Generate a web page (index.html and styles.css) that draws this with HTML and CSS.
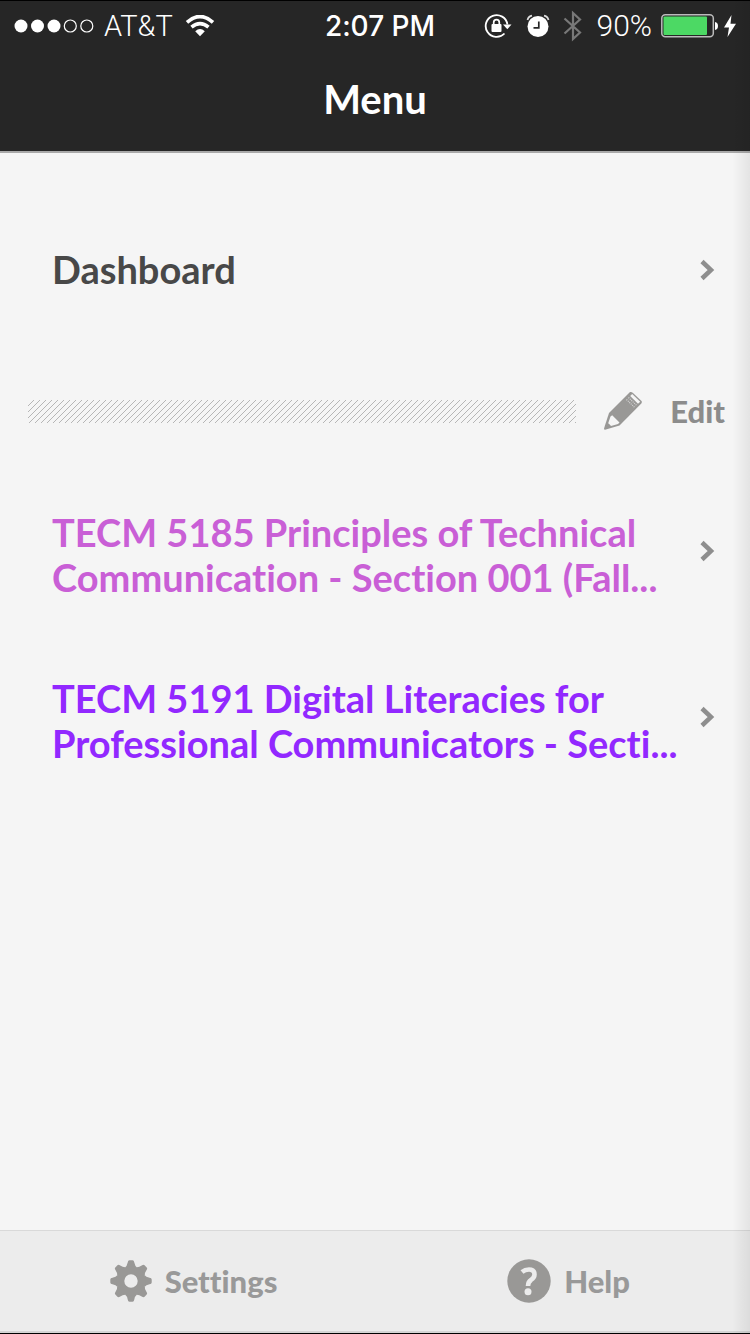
FILE: index.html
```html
<!DOCTYPE html>
<html lang="en">
<head>
<meta charset="utf-8">
<meta name="viewport" content="width=device-width, initial-scale=1">
<title>Menu</title>
<link rel="stylesheet" href="styles.css">
</head>
<body>
<div class="app">
  <header class="top">
    <div class="status">
      <div class="status-side">
        <svg class="signal" width="80" height="14" viewBox="0 0 80 14" aria-hidden="true">
          <g fill="#fff"><circle cx="7" cy="7" r="6.5"/><circle cx="23.5" cy="7" r="6.5"/><circle cx="40" cy="7" r="6.5"/></g>
          <g fill="none" stroke="#fff" stroke-width="1.2"><circle cx="56.300" cy="7" r="6"/><circle cx="72.800" cy="7" r="6"/></g>
        </svg>
        <span class="carrier">AT&amp;T</span>
        <svg class="wifi" width="30" height="22" viewBox="0 0 30 22" aria-hidden="true">
          <path d="M2 7.300Q15-4.300 28 7.300" fill="none" stroke="#fff" stroke-width="3.600"/>
          <path d="M6.500 12.200Q15 5 23.500 12.200" fill="none" stroke="#fff" stroke-width="3.600"/>
          <path d="M10.200 16.200Q15 12 19.800 16.200L15 21.200Z" fill="#fff"/>
        </svg>
      </div>
      <time class="clock">2:07 PM</time>
      <div class="status-side status-right">
        <svg width="28" height="26" viewBox="0 0 28 26" aria-hidden="true">
          <path d="M20.500 20.500A10.900 10.900 0 1 1 23.400 11.500" fill="none" stroke="#fff" stroke-width="1.800"/>
          <path d="M19 11.500H27.500L23.300 16.200Z" fill="#fff"/>
          <rect x="7.500" y="11" width="10" height="8" rx="1" fill="#fff"/>
          <path d="M9.700 11.500V9.500a2.800 2.800 0 0 1 5.600 0v2" fill="none" stroke="#fff" stroke-width="1.700"/>
        </svg>
        <svg class="alarm" width="24" height="24" viewBox="0 0 24 24" aria-hidden="true">
          <circle cx="12" cy="12.500" r="10.500" fill="#fff"/>
          <path d="M1.500 6Q2.500 2.200 6 1.600M22.500 6Q21.500 2.200 18 1.600" fill="none" stroke="#ddd" stroke-width="1.800"/>
          <path d="M12.800 7.500V13.800H7.500" fill="none" stroke="#262626" stroke-width="1.700"/>
        </svg>
        <svg class="bluetooth" width="20" height="32" viewBox="0 0 20 32" aria-hidden="true">
          <path d="M1.500 8.500L17 22.500L10 29V3L17 9.500L1.500 23.500" fill="none" stroke="#787878" stroke-width="2.200"/>
        </svg>
        <span class="percent">90%</span>
        <svg class="battery" width="58" height="24" viewBox="0 0 58 24" aria-hidden="true">
          <rect x=".8" y=".8" width="51.500" height="22" rx="3.500" fill="none" stroke="#bbb" stroke-width="1.500"/>
          <rect x="2.500" y="2.500" width="43.500" height="18.500" rx="1" fill="#4cd964"/>
          <path d="M54 8q3 .5 3 4t-3 4z" fill="#fff"/>
        </svg>
        <svg class="bolt" width="12" height="24" viewBox="0 0 12 24" aria-hidden="true"><path d="M7.500 1L0 13.500H5L3.500 23L12 9.800H6.500Z" fill="#fff"/></svg>
      </div>
    </div>
    <h1 class="title">Menu</h1>
  </header>

  <main class="content">
    <a class="row dashboard" href="#dashboard">
      <span class="row-text">Dashboard</span>
      <svg class="chevron" width="16" height="22" viewBox="0 0 16 22" aria-hidden="true"><path d="M2 2.500L11 11L2 19.500"/></svg>
    </a>

    <div class="divider">
      <svg class="hatch" height="23" aria-hidden="true">
        <defs><pattern id="stripes" width="6" height="6" patternUnits="userSpaceOnUse"><path d="M-1 7L7-1M-1 1L1-1M5 7L7 5" stroke="#b6b6b6" stroke-width="1"/></pattern></defs>
        <rect width="100%" height="23" fill="url(#stripes)"/>
      </svg>
      <button class="edit" type="button">
        <svg width="38" height="38" viewBox="0 0 38 38" aria-hidden="true">
          <path d="M26 0Q27.500-.2 29 1L37.500 9Q38.300 10 37.300 11.500L15.500 33.500L1 37.700Q0 37.700 0 36.500L5 21Z" fill="#999896"/>
          <path d="M6.500 24.500L8.200 23.300L15.500 30.500L14 32L7 34L5.700 32.500L4.200 31.200Z" fill="#f5f5f5"/>
          <path d="M26.200 4L34 11.800L36.200 9.800L28.200 2Z" fill="#f5f5f5"/>
          <path d="M24.500 5.500L32.700 13.500M22.500 7.500L30.700 15.500" fill="none" stroke="#d5d5d5" stroke-width="1.200" stroke-dasharray="1 1"/>
        </svg>
        <span>Edit</span>
      </button>
    </div>

    <nav class="courses" aria-label="Courses">
      <a class="row course orchid" href="#tecm-5185">
        <span class="row-text">TECM 5185 Principles of Technical<br>Communication - Section 001 (Fall...</span>
        <svg class="chevron" width="16" height="22" viewBox="0 0 16 22" aria-hidden="true"><path d="M2 2.500L11 11L2 19.500"/></svg>
      </a>
      <a class="row course violet" href="#tecm-5191">
        <span class="row-text">TECM 5191 Digital Literacies for<br>Professional Communicators - Secti...</span>
        <svg class="chevron" width="16" height="22" viewBox="0 0 16 22" aria-hidden="true"><path d="M2 2.500L11 11L2 19.500"/></svg>
      </a>
    </nav>
  </main>

  <footer class="toolbar">
    <button class="tool" type="button">
      <svg width="42" height="42" viewBox="-21 -21 42 42" aria-hidden="true">
        <defs><path id="tooth" d="M-6-13.500Q-4-15-3.300-18.500Q-3-20.700-1.500-20.700H1.500Q3-20.700 3.300-18.500Q4-15 6-13.500Z"/></defs>
        <g fill="#999896">
          <use href="#tooth"/><use href="#tooth" transform="rotate(45)"/><use href="#tooth" transform="rotate(90)"/><use href="#tooth" transform="rotate(135)"/>
          <use href="#tooth" transform="rotate(180)"/><use href="#tooth" transform="rotate(225)"/><use href="#tooth" transform="rotate(270)"/><use href="#tooth" transform="rotate(315)"/>
        </g>
        <circle r="10.700" fill="none" stroke="#999896" stroke-width="8"/>
      </svg>
      <span>Settings</span>
    </button>
    <button class="tool" type="button">
      <svg width="44" height="44" viewBox="0 0 44 44" aria-hidden="true">
        <circle cx="22" cy="22" r="21.700" fill="#999896"/>
        <path d="M15 13Q18 10.500 22 10.500Q27.500 10.500 27.500 15.500Q27.500 18.500 24 21Q21 23 21 27" fill="none" stroke="#ececec" stroke-width="4.600"/>
        <circle cx="21" cy="32.700" r="3.500" fill="#ececec"/>
      </svg>
      <span>Help</span>
    </button>
  </footer>
  <div class="edge-shadow" aria-hidden="true"></div>
</div>
</body>
</html>
```
FILE: styles.css
```css
* { box-sizing: border-box; }

body {
  margin: 0;
  background: #f5f5f5;
  font-family: Lato, "Liberation Sans", sans-serif;
  font-variant-ligatures: none;
}

.app {
  position: relative;
  display: flex;
  flex-direction: column;
  min-height: 100vh;
  border-bottom: 1px solid #000;
}

svg { display: block; flex: none; }

.top {
  background: #262626;
  color: #fff;
  border-top: 1px solid #000;
  border-bottom: 2px solid #a9a9a9;
}

.status {
  display: grid;
  grid-template-columns: 1fr auto 1fr;
  align-items: center;
  height: 49px;
  padding: 0 14px;
  font-family: Inter, Roboto, sans-serif;
  font-size: 28px;
}

.status-side { display: flex; align-items: center; }
.status-right { justify-content: flex-end; }
.carrier { margin-left: 10px; font-family: Roboto, sans-serif; font-size: 29px; font-weight: 300; }
.wifi { margin-left: 12px; }
.clock { padding-left: 10px; font-size: 28px; font-weight: 500; }
.alarm { margin-left: 14px; }
.bluetooth { margin-left: 13px; }
.percent { margin-left: 14px; font-family: Roboto, sans-serif; font-size: 30px; font-weight: 300; }
.battery { margin-left: 9px; }
.bolt { margin-left: 5px; }

.title {
  margin: 0;
  height: 101px;
  line-height: 99px;
  text-align: center;
  font-size: 40px;
  font-weight: 700;
}

.content { flex: 1; }

.row {
  display: flex;
  align-items: center;
  justify-content: space-between;
  padding: 38px 34px 38px 52px;
  font-size: 38px;
  font-weight: 700;
  line-height: 45px;
  text-decoration: none;
  white-space: nowrap;
}

.course { padding-top: 34px; padding-bottom: 34px; }
.course .row-text { padding-top: 8px; }

.dashboard { margin-top: 56px; color: #484848; }
.orchid { color: #c95fd6; }
.violet { color: #9228ff; }

.chevron path { fill: none; stroke: #8e8e8e; stroke-width: 4.500; }

.divider {
  display: flex;
  align-items: center;
  gap: 28px;
  margin-top: 61px;
  padding: 0 25px 0 28px;
}

.hatch { flex: 1; min-width: 0; }

button {
  display: flex;
  align-items: center;
  border: 0;
  margin: 0;
  background: none;
  font-family: inherit;
  font-variant-ligatures: none;
  font-size: 31px;
  line-height: 40px;
  font-weight: 900;
}

.edit { gap: 28px; padding: 0; color: #8c8c8c; }

.courses { margin-top: 37px; }

.toolbar {
  display: grid;
  grid-template-columns: 1fr 1fr;
  height: 103px;
  background: #ececec;
  border-top: 1px solid #d9d9d9;
  border-bottom: 2px solid #d4d4d4;
}

.tool {
  justify-content: center;
  gap: 13px;
  padding: 0 0 0 12px;
  color: #999;
}

.edge-shadow {
  position: absolute;
  top: 0;
  right: 0;
  bottom: 0;
  width: 18px;
  pointer-events: none;
  background: linear-gradient(to right, rgba(0, 0, 0, 0), rgba(0, 0, 0, .07));
}
```
